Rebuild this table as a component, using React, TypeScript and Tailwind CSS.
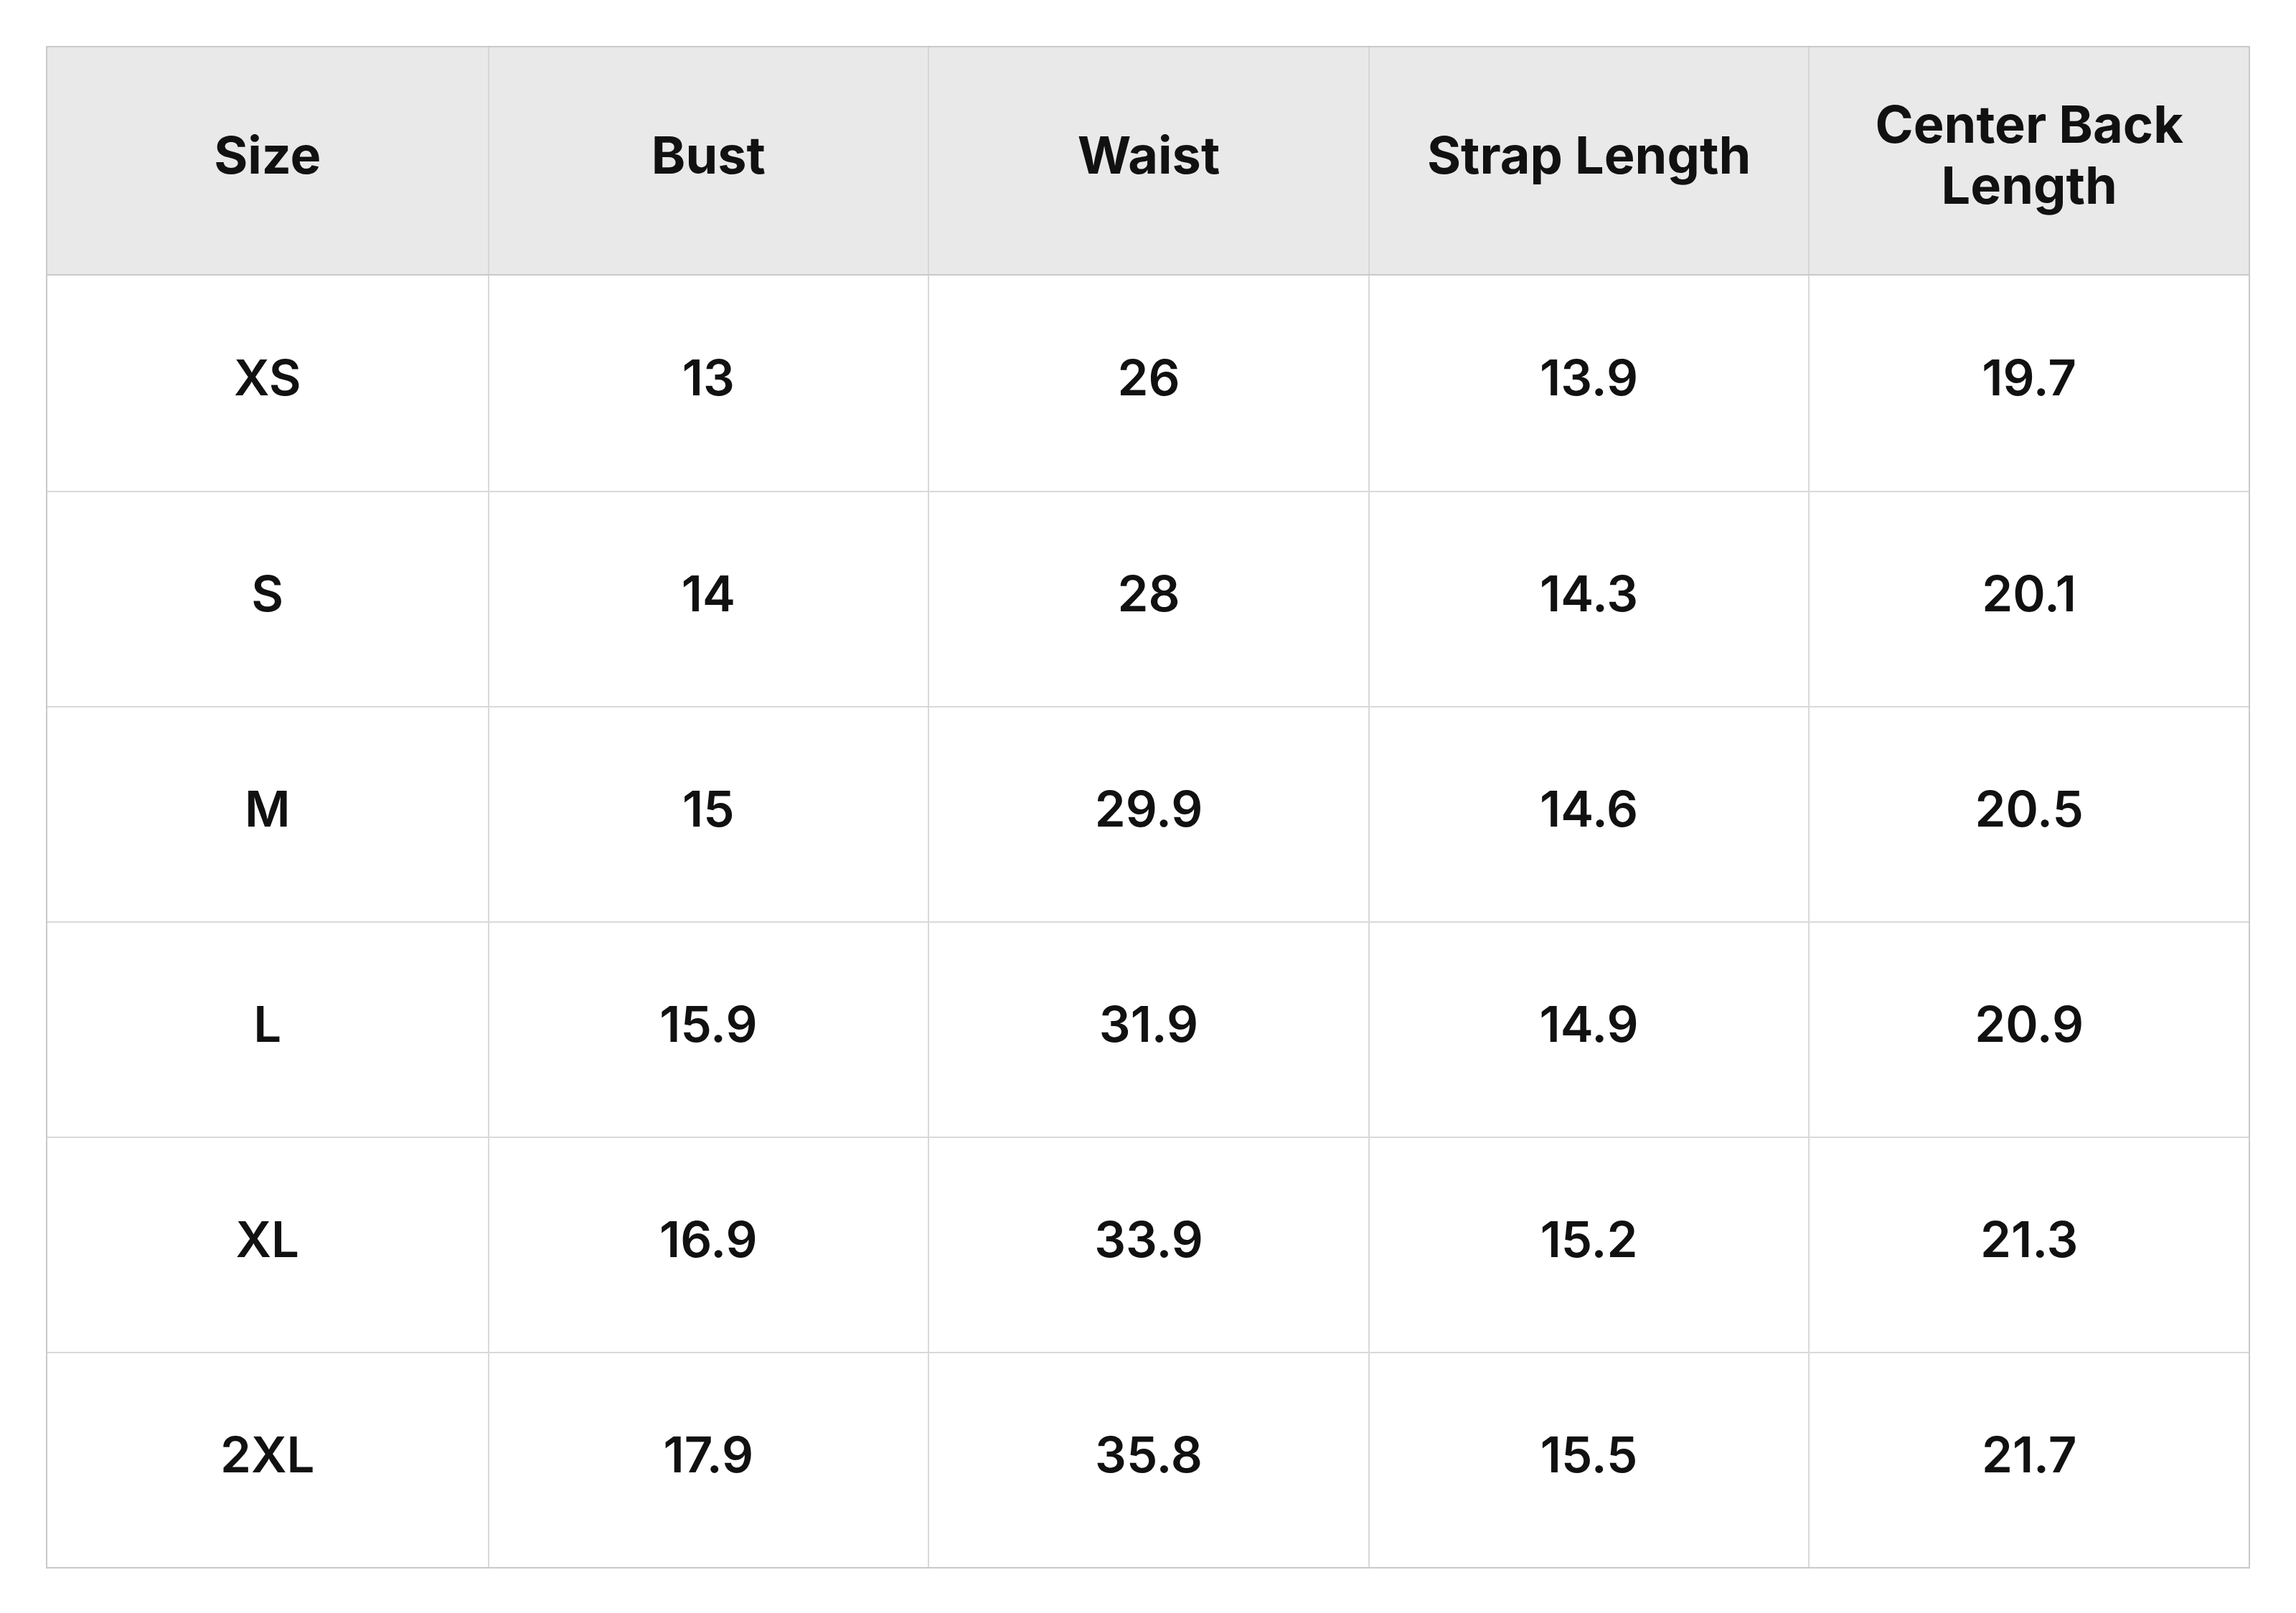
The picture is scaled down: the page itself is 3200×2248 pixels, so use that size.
const headers = ['Size', 'Bust', 'Waist', 'Strap Length', 'Center Back Length']

const rows = [
  ['XS', '13', '26', '13.9', '19.7'],
  ['S', '14', '28', '14.3', '20.1'],
  ['M', '15', '29.9', '14.6', '20.5'],
  ['L', '15.9', '31.9', '14.9', '20.9'],
  ['XL', '16.9', '33.9', '15.2', '21.3'],
  ['2XL', '17.9', '35.8', '15.5', '21.7'],
]

export default function App() {
  return (
    <div className="min-h-screen bg-white p-[64px] text-[#111111]" style={{ fontFamily: 'Inter, "Noto Sans", sans-serif' }}>
      <div className="w-[3072px] border-2 border-[#c9c9c9]">
        {/* header */}
        <div className="grid h-[318px] grid-cols-5 border-b-2 border-[#c9c9c9] bg-[#e9e9e9]">
          {headers.map((h, i) => (
            <div
              key={h}
              className={`flex items-center justify-center px-[40px] pb-[16px] text-center text-[72px] font-bold leading-[1.18] ${i > 0 ? 'border-l-2 border-[#d6d6d6]' : ''}`}
            >
              {h}
            </div>
          ))}
        </div>

        {/* body */}
        {rows.map((r, ri) => (
          <div key={r[0]} className={`grid h-[300px] grid-cols-5 ${ri > 0 ? 'border-t-2 border-[#d9d9d9]' : ''}`}>
            {r.map((v, i) => (
              <div
                key={i}
                className={`flex items-center justify-center pb-[14px] text-[69px] font-semibold ${i > 0 ? 'border-l-2 border-[#d9d9d9]' : ''}`}
              >
                {v}
              </div>
            ))}
          </div>
        ))}
      </div>
    </div>
  )
}
